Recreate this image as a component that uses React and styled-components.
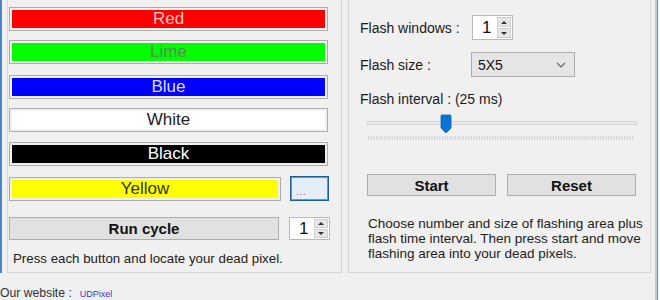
import React from "react";
import styled, { createGlobalStyle } from "styled-components";

const GlobalStyle = createGlobalStyle`
  html, body {
    margin: 0;
    padding: 0;
    background: #f0f0f0;
  }
  body {
    font-family: "Liberation Sans", Arial, sans-serif;
    color: #1a1a1a;
    width: 660px;
    height: 300px;
    overflow: hidden;
  }
`;

const Window = styled.div`
  width: 660px;
  height: 300px;
  display: flex;
  background: #f0f0f0;
`;

const Body = styled.div`
  display: flex;
  flex-direction: column;
  width: 651px;
`;

const Main = styled.div`
  display: flex;
  height: 273px;
`;

const LeftEdge = styled.div`
  width: 2px;
  flex-shrink: 0;
  background: #4a86c5;
`;

const RightEdge = styled.div`
  display: flex;
  margin-left: 4px;
  & > div:first-child {
    width: 2px;
    background: #b8cde0;
  }
  & > div:nth-child(2) {
    width: 1px;
    background: #6f93b8;
  }
  & > div:last-child {
    width: 2px;
    background: #f7f7f7;
  }
`;

const Group = styled.div`
  box-sizing: border-box;
  height: 273px;
  border: 1px solid #d5d5d5;
  border-top: none;
  margin-left: ${(p) => p.$ml}px;
  width: ${(p) => p.$w}px;
  padding: ${(p) => p.$pad};
  display: flex;
  flex-direction: column;
`;

const ColorButton = styled.div`
  box-sizing: border-box;
  width: ${(p) => p.$w || 319}px;
  height: 24px;
  margin-top: ${(p) => p.$mt || 0}px;
  border: 1px solid #adadad;
  background: ${(p) => p.$bg};
  box-shadow: inset 0 0 0 2px #f0f0f0;
  color: ${(p) => p.$fg};
  font-size: 17px;
  display: flex;
  align-items: center;
  justify-content: center;
`;

const Row = styled.div`
  display: flex;
  align-items: center;
  gap: ${(p) => p.$gap || 0}px;
  margin-top: ${(p) => p.$mt || 0}px;
  margin-left: ${(p) => p.$ml || 0}px;
  height: ${(p) => p.$h}px;
`;

const DotsButton = styled.div`
  box-sizing: border-box;
  width: 39px;
  height: 25px;
  border: 1px solid #1f5f95;
  box-shadow: inset 0 0 0 1px #5a9ad0;
  background: #e3eef8;
  color: #e05a6a;
  font-size: 11px;
  padding: 8px 0 0 5px;
  letter-spacing: 0.5px;
`;

const PushButton = styled.div`
  box-sizing: border-box;
  width: ${(p) => p.$w}px;
  height: ${(p) => p.$h}px;
  border: 1px solid #adadad;
  background: #e1e1e1;
  font-weight: bold;
  font-size: 15px;
  color: #111;
  display: flex;
  align-items: center;
  justify-content: center;
`;

const Spinner = styled.div`
  box-sizing: border-box;
  width: ${(p) => p.$w}px;
  height: ${(p) => p.$h}px;
  border: 1px solid #b9b9b9;
  background: #fff;
  display: flex;
  font-size: 17px;
  color: #111;
`;

const SpinValue = styled.div`
  flex: 1;
  display: flex;
  align-items: center;
  padding-left: 9px;
`;

const SpinArrows = styled.div`
  width: 14px;
  display: flex;
  flex-direction: column;
  gap: 1px;
  padding: 1px 1px 1px 0;
`;

const SpinArrow = styled.div`
  flex: 1;
  background: #e6e6e6;
  border: 1px solid #cfcfcf;
  display: flex;
  align-items: center;
  justify-content: center;
  &::after {
    content: "";
    border-left: 3px solid transparent;
    border-right: 3px solid transparent;
    ${(p) =>
      p.$down
        ? "border-top: 3px solid #333;"
        : "border-bottom: 3px solid #333;"}
  }
`;

const Note = styled.div`
  font-size: ${(p) => p.$size}px;
  line-height: ${(p) => p.$lh || 16}px;
  margin-top: ${(p) => p.$mt || 0}px;
  padding-left: ${(p) => p.$pl || 0}px;
  color: #222;
`;

const Label = styled.div`
  font-size: 14px;
  width: ${(p) => p.$w}px;
  color: #1a1a1a;
`;

const Select = styled.div`
  box-sizing: border-box;
  width: 104px;
  height: 25px;
  border: 1px solid #adadad;
  background: #e5e5e5;
  display: flex;
  align-items: center;
  justify-content: space-between;
  padding: 0 8px 0 6px;
  font-size: 14px;
  color: #111;
`;

const Slider = styled.div`
  position: relative;
  width: 270px;
  height: 35px;
  margin-left: 7px;
`;

const Track = styled.div`
  box-sizing: border-box;
  margin-top: 14px;
  height: 4px;
  border: 1px solid #d6d6d6;
  background: #e7eaea;
`;

const Thumb = styled.svg`
  position: absolute;
  left: 73px;
  top: 7px;
`;

const Ticks = styled.svg`
  display: block;
  margin-top: 11px;
`;

const Footer = styled.div`
  height: 27px;
  display: flex;
  align-items: flex-end;
  box-sizing: border-box;
  font-size: 12.2px;
  color: #333;
`;

const Link = styled.span`
  font-size: 9px;
  color: #3a3ad0;
  margin-left: 8px;
  margin-bottom: 1px;
`;

const colors = [
  { name: "Red", bg: "#fe0000", fg: "#f6c4c4", mt: 0 },
  { name: "Lime", bg: "#00fe00", fg: "#5a8c5a", mt: 9 },
  { name: "Blue", bg: "#0000fe", fg: "#dcdcff", mt: 11 },
  { name: "White", bg: "#ffffff", fg: "#222", mt: 9 },
  { name: "Black", bg: "#000000", fg: "#ffffff", mt: 10 },
];

const SpinBox = ({ w, h }) => (
  <Spinner $w={w} $h={h}>
    <SpinValue>1</SpinValue>
    <SpinArrows>
      <SpinArrow />
      <SpinArrow $down />
    </SpinArrows>
  </Spinner>
);

export default function App() {
  const ticks = Array.from({ length: 101 }, (_, i) => 1.5 + i * 2.64);
  return (
    <>
      <GlobalStyle />
      <Window>
        <Body>
          <Main>
            <LeftEdge />
            <Group $ml={5} $w={335} $pad="7px 0 0 1px">
              {colors.map((c) => (
                <ColorButton key={c.name} $bg={c.bg} $fg={c.fg} $mt={c.mt}>
                  {c.name}
                </ColorButton>
              ))}
              <Row $gap={9} $mt={10} $h={25}>
                <ColorButton $bg="#ffff00" $fg="#333" $w={272}>
                  Yellow
                </ColorButton>
                <DotsButton>...</DotsButton>
              </Row>
              <Row $gap={10} $mt={16} $h={23}>
                <PushButton $w={270} $h={23}>
                  Run cycle
                </PushButton>
                <SpinBox w={41} h={23} />
              </Row>
              <Note $size={13.3} $mt={11} $pl={4}>
                Press each button and locate your dead pixel.
              </Note>
            </Group>

            <Group $ml={6} $w={303} $pad="15px 0 0 11px">
              <Row $h={25}>
                <Label $w={112}>Flash windows :</Label>
                <SpinBox w={41} h={25} />
              </Row>
              <Row $h={25} $mt={12}>
                <Label $w={111}>Flash size :</Label>
                <Select>
                  5X5
                  <svg width="10" height="6" viewBox="0 0 10 6">
                    <path d="M1 1 L5 5 L9 1" fill="none" stroke="#666" strokeWidth="1.2" />
                  </svg>
                </Select>
              </Row>
              <Row $h={16} $mt={14}>
                <Label>Flash interval : (25 ms)</Label>
              </Row>
              <Slider>
                <Track />
                <Thumb width="12" height="20" viewBox="0 0 12 20">
                  <path d="M1 2 Q1 1 2 1 H10 Q11 1 11 2 V14 L6 19 L1 14 Z" fill="#0a74d4" stroke="#0a5fb0" strokeWidth="0.8" />
                </Thumb>
                <Ticks width="270" height="5" viewBox="0 0 270 5">
                  {ticks.map((x, i) => (
                    <line key={i} x1={x} y1="0" x2={x} y2="4" stroke="#d0d0d0" strokeWidth="1" />
                  ))}
                </Ticks>
              </Slider>
              <Row $gap={11} $mt={32} $h={22} $ml={7}>
                <PushButton $w={129} $h={22}>
                  Start
                </PushButton>
                <PushButton $w={129} $h={22}>
                  Reset
                </PushButton>
              </Row>
              <Note $size={13.5} $lh={15} $mt={20} $pl={8}>
                Choose number and size of flashing area plus
                <br />
                flash time interval. Then press start and move
                <br />
                flashing area into your dead pixels.
              </Note>
            </Group>
          </Main>
          <Footer>
            Our website :<Link>UDPixel</Link>
          </Footer>
        </Body>
        <RightEdge>
          <div />
          <div />
          <div />
        </RightEdge>
      </Window>
    </>
  );
}
